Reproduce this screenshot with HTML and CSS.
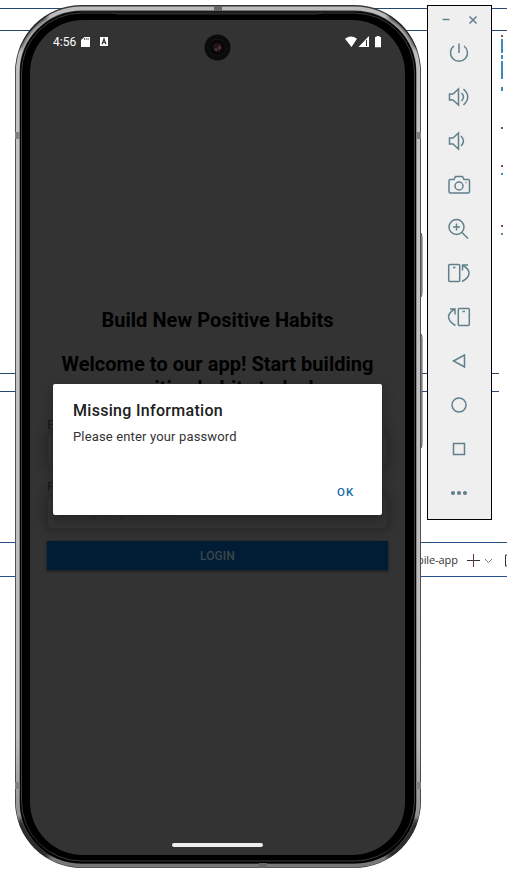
FILE: index.html
```html
<!DOCTYPE html>
<html lang="en">
<head>
<meta charset="utf-8">
<title>Build New Positive Habits</title>
<link rel="stylesheet" href="styles.css">
</head>
<body>
<div class="desktop">
  <div class="band band-top"></div>
  <div class="band band-middle"></div>
  <div class="band band-bottom">
    <span class="tab-name">bile-app</span>
    <svg class="tab-icons" width="44" height="20" viewBox="0 0 44 20" fill="none"><path d="M0 10.500h13" stroke="#333"/><path d="M6.500 4v13" stroke="#673657"/><path d="M18 9l3.500 3.500L25 9" stroke="#777"/><path d="M44 5h-5.500v11H44" stroke="#333"/></svg>
  </div>
  <svg class="code-marks" width="4" height="210" viewBox="0 0 4 210"><path fill="#3a8dbb" d="M1 9h2v14H1zM1 25h2v4H1zM1 31h2v18H1zM1 57h2v4H1zM1 143h2v2H1z"/><path fill="#904848" d="M1 5h2v2H1zM1 97h2v2H1zM1 135h2v2H1zM1 195h2v2H1z"/><path fill="#5c8998" d="M1 203h2v2H1z"/></svg>

  <main class="phone">
    <svg class="frame" width="410" height="864" viewBox="0 0 410 864" fill="none">
      <defs>
        <linearGradient id="metal" x1="0" y1="0" x2="0" y2="1"><stop stop-color="#bbb"/><stop offset=".2" stop-color="#c4c4c4"/><stop offset=".85" stop-color="#bbb"/><stop offset="1" stop-color="#777"/></linearGradient>
        <filter id="soft" x="-30%" y="-30%" width="160%" height="160%"><feGaussianBlur stdDeviation="2.5"/></filter>
        <clipPath id="body"><rect width="406" height="863" rx="67"/></clipPath>
      </defs>
      <path d="M405 228h1q1 2 1 5v54q0 4-1 5h-1zM405 329h1q1 2 1 5v104q0 4-1 5h-1z" fill="#aaa" stroke="#555"/>
      <rect width="406" height="863" rx="67" fill="#353535"/>
      <g clip-path="url(#body)">
        <rect x="2.700" y="3.500" width="400.600" height="857" rx="64" stroke="url(#metal)" stroke-width="3.800"/>
        <rect x="5" y="6.500" width="396" height="852" rx="61" fill="#000"/>
        <rect x="6.500" y="8" width="393" height="848" rx="60" stroke="#3c3c3c"/>
        <path d="M3 42Q11 20 31 10M375 10q20 10 28 32M4 815q8 22 29 37M402 815q-8 22-29 37" stroke="#080808" stroke-width="6" filter="url(#soft)"/>
        <path d="M0 130.500h5M401 130.500h5M0 780.500h5M401 780.500h5" stroke="#808080" stroke-width="7"/>
        <path d="M203 1v5M248 858v5" stroke="#666" stroke-width="8"/>
        <path d="M97 7.500l5 1.500h200l5-1.500" stroke="#333"/>
      </g>
    </svg>
    <section class="screen">
      <header class="status">
        <span class="clock">4:56</span>
        <svg class="status-left" width="28" height="12" viewBox="0 0 28 12"><path fill="#fff" d="M3.500 1H9v10H0V4zM19 1h8v9h-8z"/><path stroke="#333" stroke-width=".7" d="M3.500 2v2M5.300 2v2M7.100 2v2"/><path fill="none" stroke="#333" stroke-width="1.200" d="M21 8.200L23 3l2 5.200M21.500 6.500h3"/></svg>
        <svg class="status-right" width="38" height="12" viewBox="0 0 38 12"><path fill="#fff" d="M0 2.800Q6-2 12 2.800L6.500 11zM24 0v11H13.500zM31.500 1V0h3v1H36v10.300h-6V1z"/><path fill="#333" d="M21 4h1v6h-1z"/></svg>
      </header>
      <svg class="camera" width="27" height="27" viewBox="0 0 27 27"><circle cx="13.500" cy="13.500" r="13" fill="#0b0b0b"/><circle cx="13.500" cy="13.500" r="8.300" fill="#090607" stroke="#151515"/><circle cx="13.500" cy="13.500" r="4.500" fill="#20161a"/><path d="M15 11l2 3-3 2z" fill="#7a3344"/><circle cx="12" cy="15.500" r="1.200" fill="#51434c"/></svg>
      <form class="login">
        <h1>Build New Positive Habits</h1>
        <h2>Welcome to our app! Start building<br>positive habits today!</h2>
        <label class="email">Email</label>
        <div class="field email-field"></div>
        <label>Password</label>
        <div class="field password-field">Enter your password</div>
        <button type="button" class="login-button">LOGIN</button>
      </form>
      <div class="home-bar"></div>
      <div class="dialog" role="dialog">
        <h3>Missing Information</h3>
        <p>Please enter your password</p>
        <button type="button" class="ok">OK</button>
      </div>
    </section>
  </main>

  <aside class="tools">
    <svg class="window-buttons" width="63" height="22" viewBox="0 0 63 22"><path d="M14.500 10.500h7"/><path d="M41.500 7.500l7 7m0-7l-7 7"/></svg>
    <svg viewBox="0 0 24 24"><path d="M7 5a8.500 8.500 0 1 0 10 0M12 2.500V12"/></svg>
    <svg viewBox="0 0 24 24"><path d="M2.500 9h3.500L11.500 4v16L6 15H2.500zM14.500 8q4 4 0 8M16.500 4q8.500 8 0 16"/></svg>
    <svg viewBox="0 0 24 24"><path d="M2.500 9h3.500L11.500 4v16L6 15H2.500zM14 7q5 5 0 10"/></svg>
    <svg viewBox="0 0 24 24"><path d="M3 6.500h4l1.500-3h7l1.500 3h4q1.500 0 1.500 1.500v10.500q0 1.500-1.500 1.500H3.500Q2 20 2 18.500V8q0-1.500 1-1.500z"/><circle cx="12" cy="13" r="4"/><path d="M18.500 9.500h1"/></svg>
    <svg viewBox="0 0 24 24"><circle cx="9.500" cy="10" r="7.500"/><path d="M15 15.500l6 6M6 10h7M9.500 6.500v7"/></svg>
    <svg viewBox="0 0 24 24"><rect x="1.700" y="3.500" width="11" height="17" rx="1"/><path d="M6 6.500h2.500M15 20.500q7.500-4 7-9-.5-4-6-7M15.500 9.500V4H21"/></svg>
    <svg viewBox="0 0 24 24"><rect x="11.300" y="3.500" width="11" height="17" rx="1"/><path d="M15.500 6.500H18M8.500 20.500q-7-4-7-9 .5-4 5.500-7M3 4h5v5.500"/></svg>
    <svg viewBox="0 0 24 24"><path d="M6.500 12L17.500 6v12z"/></svg>
    <svg viewBox="0 0 24 24"><circle cx="12" cy="12" r="7"/></svg>
    <svg viewBox="0 0 24 24"><path d="M6.500 6.500h11v11h-11z"/></svg>
    <svg viewBox="0 0 24 24" class="dots"><circle cx="6" cy="12" r="2.100"/><circle cx="12" cy="12" r="2.100"/><circle cx="18" cy="12" r="2.100"/></svg>
  </aside>
</div>
</body>
</html>
```
FILE: styles.css
```css
* { box-sizing: border-box; }
body { margin: 0; background: #fff; overflow: hidden; font-family: Roboto, sans-serif; }
.desktop { position: relative; width: 507px; height: 882px; overflow: hidden; }
.band { position: absolute; left: 0; width: 507px; border: solid #26508a; border-width: 1px 0; }
.band-top { top: 8px; height: 23px; border-color: #26486e; }
.band-middle { top: 373px; width: 499px; height: 19px; border-color: #26486e; }
.band-bottom { top: 542px; height: 35px; display: flex; align-items: center; padding-left: 417px; }
.tab-name { flex: none; width: 50px; font: 11px "Open Sans", sans-serif; color: #333; white-space: nowrap; letter-spacing: -.1px; }
.tab-icons { flex: none; }
.code-marks { position: absolute; left: 500px; top: 30px; }
.phone { position: absolute; left: 15px; top: 5px; width: 410px; height: 864px; padding: 15px; }
.frame { position: absolute; left: 0; top: 0; }
.screen { position: relative; width: 375px; height: 835px; overflow: hidden; border-radius: 53px; background: #333; }
.status { display: flex; align-items: center; height: 24px; margin-top: 10px; padding: 0 22px 0 23px; color: #fff; }
.clock { width: 28px; font-size: 12px; line-height: 24px; }
.status-right { margin-left: auto; }
.camera { position: absolute; left: 174px; top: 14px; }
.login { display: flex; flex-direction: column; padding: 253px 17px 0; }
h1, h2, h3, p { margin: 0; }
h1, h2 { font-size: 20px; line-height: 23px; font-weight: 700; text-align: center; color: #000; white-space: nowrap; letter-spacing: .04px; }
h1 { padding-top: 2px; }
h2 { margin-top: 20px; line-height: 24px; }
label { height: 16px; font-size: 13px; line-height: 16px; color: #111; }
.email { margin-top: 17px; }
.field { border: 1px solid #2b2b2b; border-radius: 6px; background: #333; box-shadow: 0 0 9px 3px #2b2b2b; font-size: 13px; line-height: 20px; color: #151515; padding: 6px 10px; }
.email-field { height: 34px; margin: 0 0 12px; }
.password-field { height: 34px; margin-bottom: 12px; }
.login-button { height: 29px; border: 0; border-radius: 1px; background: #001d35; color: #3d454b; font: 500 12px Roboto, sans-serif; letter-spacing: .1px; box-shadow: 0 1px 3px #151515; }
.home-bar { position: absolute; left: 142px; top: 823px; width: 91px; height: 4px; border-radius: 2px; background: #eee; }
.dialog { position: absolute; left: 22.500px; top: 363.500px; width: 329.500px; height: 131.500px; padding: 16.500px 20.500px; border-radius: 2px; background: #fff; color: #202020; box-shadow: 0 5px 12px #242424; display: flex; flex-direction: column; }
.dialog h3 { font-size: 16px; line-height: 22px; font-weight: 500; white-space: nowrap; letter-spacing: .3px; }
.dialog p { margin-top: 6px; font-size: 13px; line-height: 18px; color: #333; letter-spacing: .15px; }
.ok { align-self: flex-end; margin: 37.500px 7px 0 0; padding: 0; border: 0; background: none; color: #176da7; font: 500 11.500px/16px Roboto, sans-serif; letter-spacing: 1.200px; }
.tools { position: absolute; left: 427px; top: 5px; width: 65px; height: 515px; border: 1px solid #000; background: #efefef; display: flex; flex-direction: column; align-items: center; }
.tools svg { width: 24px; height: 24px; margin: 10px 2px 10px 0; flex: none; fill: none; stroke: #60808c; stroke-width: 1.500; }
.tools .window-buttons { width: 63px; height: 22px; margin: 3px 0 0; }
.tools .dots { fill: #60808c; stroke: none; }
```
